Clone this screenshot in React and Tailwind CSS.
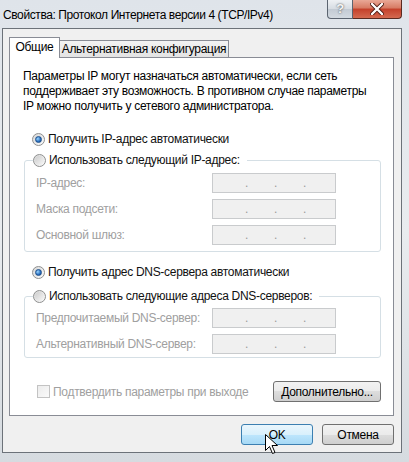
import React from "react";

function Radio({ checked }) {
    return (
        <span className="w-[13px] h-[13px] rounded-full border border-[#8e8f8f] bg-linear-to-br from-[#d8d8d8] to-[#fbfbfb] flex items-center justify-center shrink-0">
            {checked ? (
                <span className="w-[7px] h-[7px] rounded-full border border-[#1c4f8c] bg-[radial-gradient(circle_at_35%_35%,#9ad6ff,#2a6fbf_60%,#163f7a)]" />
            ) : (
                <span className="w-[9px] h-[9px] rounded-full bg-linear-to-br from-[#cdcdcd] to-[#f7f7f7]" />
            )}
        </span>
    );
}

function IpBox() {
    return (
        <div className="w-[124px] h-[20px] shrink-0 border border-[#c9cbcd] bg-[#f0f0f0] flex items-end pb-[4px] pl-[32px] gap-[26px] text-[#9a9a9a] leading-[10px]">
            <span className="w-[3px]">.</span>
            <span className="w-[3px]">.</span>
            <span className="w-[3px]">.</span>
        </div>
    );
}

function Row({ label }) {
    return (
        <div className="flex items-center justify-between h-[20px] pl-[11px] pr-[44px]">
            <span className="text-[#a0a0a0] whitespace-nowrap">{label}</span>
            <IpBox />
        </div>
    );
}

function Btn({ children, hot, className }) {
    return (
        <div
            className={
                "h-[21px] rounded-[3px] border flex items-center justify-center text-black whitespace-nowrap " +
                (hot
                    ? "border-[#3c7fb1] bg-[linear-gradient(#eaf6fd_0%,#d9f0fc_50%,#bee6fd_50%,#a7d9f5_100%)] "
                    : "border-[#707070] bg-[linear-gradient(#f2f2f2_0%,#ebebeb_50%,#dddddd_50%,#cfcfcf_100%)] ") +
                className
            }
        >
            {children}
        </div>
    );
}

export default function App() {
    return (
        <div className="relative w-[409px] h-[462px] flex flex-col overflow-hidden bg-linear-to-b from-[#dfe4ea] via-[#e9ecef] to-[#d6dbe0] font-['Liberation_Sans',Arial,sans-serif] text-[12px] tracking-[-0.3px] text-[#111]">
            {/* title bar */}
            <div className="h-[28px] flex items-start shrink-0">
                <span className="pl-[3px] pt-[7px] leading-[16px] text-black whitespace-nowrap tracking-[-0.4px]">Свойства: Протокол Интернета версии 4 (TCP/IPv4)</span>
                <div className="ml-auto mr-[7px] flex">
                    <div className="w-[26px] h-[19px] rounded-bl-[4px] border border-t-0 border-[#5b6470] bg-[linear-gradient(#eef1f4_0%,#d6dce2_50%,#c2cad3_50%,#d3dae1_100%)] flex items-center justify-center text-[13px] font-bold text-[#f4f4f4] [text-shadow:0_0_2px_#333]">
                        ?
                    </div>
                    <div className="w-[49px] h-[19px] rounded-br-[4px] border border-t-0 border-l-0 border-[#5a2a20] bg-[linear-gradient(#e9a896_0%,#d77a63_45%,#c4402a_50%,#d46a50_100%)] flex items-center justify-center">
                        <svg width="14" height="12" viewBox="0 0 14 12">
                            <path d="M2 1 L12 11 M12 1 L2 11" stroke="#4a1a12" strokeWidth="4" strokeLinecap="round" />
                            <path d="M2 1 L12 11 M12 1 L2 11" stroke="#ffffff" strokeWidth="2.4" strokeLinecap="round" />
                        </svg>
                    </div>
                </div>
            </div>

            {/* client area */}
            <div className="ml-[2px] mr-[7px] mb-[9px] flex-1 border border-[#6c7279] bg-[#f0f0f0] flex flex-col pl-[6px] pr-[7px]">
                {/* tabs */}
                <div className="mt-[8px] h-[20px] flex items-end shrink-0">
                    <div className="h-[21px] w-[51px] -mb-px relative z-10 border border-b-0 border-[#898c95] bg-white flex items-center justify-center pb-[2px] text-black whitespace-nowrap">
                        Общие
                    </div>
                    <div className="h-[17px] w-[169px] border border-l-0 border-b-0 border-[#898c95] bg-linear-to-b from-[#f3f3f3] to-[#e3e3e3] flex items-center justify-center text-black whitespace-nowrap">
                        Альтернативная конфигурация
                    </div>
                </div>

                {/* panel */}
                <div className="h-[359px] border border-[#898c95] bg-white flex flex-col shrink-0">
                    <p className="pt-[11px] pl-[13px] leading-[15px] text-black whitespace-nowrap">
                        Параметры IP могут назначаться автоматически, если сеть
                        <br />
                        поддерживает эту возможность. В противном случае параметры
                        <br />
                        IP можно получить у сетевого администратора.
                    </p>

                    <div className="mt-[17px] ml-[22px] h-[16px] flex items-center gap-[3px] whitespace-nowrap">
                        <Radio checked />
                        <span>Получить IP-адрес автоматически</span>
                    </div>

                    <fieldset className="mt-[5px] ml-[14px] mr-[12px] border border-[#d5dfe5] rounded-[3px] pb-[6px]">
                        <legend className="ml-[8px] pr-[7px] h-[16px] flex items-center gap-[3px] whitespace-nowrap">
                            <Radio />
                            <span>Использовать следующий IP-адрес:</span>
                        </legend>
                        <div className="pt-[5px] flex flex-col gap-[6px]">
                            <Row label="IP-адрес:" />
                            <Row label="Маска подсети:" />
                            <Row label="Основной шлюз:" />
                        </div>
                    </fieldset>

                    <div className="mt-[12px] ml-[22px] h-[16px] flex items-center gap-[3px] whitespace-nowrap">
                        <Radio checked />
                        <span>Получить адрес DNS-сервера автоматически</span>
                    </div>

                    <fieldset className="mt-[8px] ml-[14px] mr-[12px] border border-[#d5dfe5] rounded-[3px] pb-[3px]">
                        <legend className="ml-[8px] pr-[7px] h-[16px] flex items-center gap-[3px] whitespace-nowrap">
                            <Radio />
                            <span>Использовать следующие адреса DNS-серверов:</span>
                        </legend>
                        <div className="pt-[4px] flex flex-col gap-[6px]">
                            <Row label="Предпочитаемый DNS-сервер:" />
                            <Row label="Альтернативный DNS-сервер:" />
                        </div>
                    </fieldset>

                    <div className="mt-[23px] ml-[27px] mr-[12px] h-[21px] flex items-center">
                        <span className="w-[13px] h-[13px] shrink-0 border border-[#c3c3c3] bg-linear-to-br from-[#ececec] to-[#fafafa]" />
                        <span className="ml-[3px] text-[#a0a0a0] whitespace-nowrap">Подтвердить параметры при выходе</span>
                        <Btn className="ml-auto w-[108px]">Дополнительно...</Btn>
                    </div>
                </div>

                {/* dialog buttons */}
                <div className="mt-[8px] h-[21px] flex justify-end gap-[9px] shrink-0">
                    <Btn hot className="w-[72px]">OK</Btn>
                    <Btn className="w-[72px]">Отмена</Btn>
                </div>
            </div>

            {/* mouse cursor */}
            <svg className="absolute left-[265px] top-[434px]" width="13" height="21" viewBox="0 0 13 21">
                <path d="M0.5 0.5 L0.5 16.5 L4.5 12.5 L7.5 19.5 L10 18.5 L7 11.5 L12.5 11.5 Z" fill="#ffffff" stroke="#000000" strokeWidth="1" strokeLinejoin="round" />
            </svg>
        </div>
    );
}
